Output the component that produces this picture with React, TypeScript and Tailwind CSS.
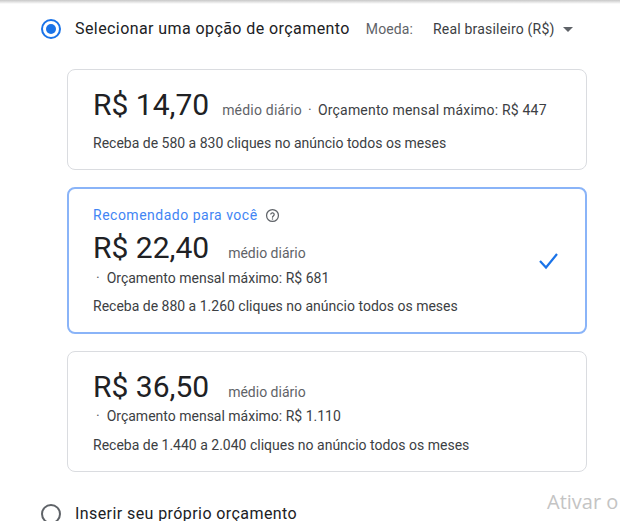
import React from 'react';

const font = { fontFamily: 'Roboto, "Liberation Sans", Arial, sans-serif' };

const Radio: React.FC<{ checked?: boolean }> = ({ checked }) => (
    <span
        className={`flex h-[20px] w-[20px] shrink-0 items-center justify-center rounded-full border-2 ${checked ? 'border-[#1a73e8]' : 'border-[#5f6368]'}`}
    >
        {checked && <span className="h-[10px] w-[10px] rounded-full bg-[#1a73e8]" />}
    </span>
);

interface Option {
    price: string;
    monthly: string;
    clicks: string;
    recommended?: boolean;
    inline?: boolean;
}

const options: Option[] = [
    { price: 'R$ 14,70', monthly: 'R$ 447', clicks: '580 a 830', inline: true },
    { price: 'R$ 22,40', monthly: 'R$ 681', clicks: '880 a 1.260', recommended: true },
    { price: 'R$ 36,50', monthly: 'R$ 1.110', clicks: '1.440 a 2.040' },
];

const BudgetCard: React.FC<{ opt: Option }> = ({ opt }) => {
    const border = opt.recommended
        ? 'border-2 border-[#8ab4f8] pl-[24px] pr-[25px] pt-[16px] pb-[16px]'
        : 'border border-[#dadce0] pl-[25px] pr-[28px] pt-[17px] pb-[16px]';
    return (
        <div className={`flex items-center rounded-[8px] bg-white ${border}`}>
            <div className="flex-1">
                {opt.recommended && (
                    <div className="mb-[5px] flex items-center gap-[7px] text-[14px] leading-[20px] tracking-[0.5px] text-[#4285f4]">
                        <span>Recomendado para você</span>
                        <svg width="15" height="15" viewBox="0 0 24 24" fill="none">
                            <circle cx="12" cy="12" r="9.5" stroke="#5f6368" strokeWidth="2" />
                            <path d="M9.3 9.6a2.8 2.8 0 0 1 5.4 1c0 1.9-2.7 2.3-2.7 4" stroke="#5f6368" strokeWidth="2" fill="none" strokeLinecap="round" />
                            <circle cx="12" cy="17.6" r="1.2" fill="#5f6368" />
                        </svg>
                    </div>
                )}
                <div className="flex items-baseline">
                    <span className="text-[30px] leading-[36px] text-[#202124]">{opt.price}</span>
                    <span className={`text-[14px] leading-[20px] text-[#5f6368] ${opt.inline ? 'ml-[13px] tracking-[0.2px]' : 'ml-[19px]'}`}>
                        médio diário
                        {opt.inline && (
                            <>
                                <span className="mx-[6px]">·</span>
                                <span className="text-[#3c4043]">Orçamento mensal máximo: {opt.monthly}</span>
                            </>
                        )}
                    </span>
                </div>
                {!opt.inline && (
                    <div className={`${opt.recommended ? 'mt-[2px]' : 'mt-[1px]'} pl-[3px] text-[14px] leading-[20px] text-[#3c4043]`}>
                        <span className="mr-[7px] text-[#5f6368]">·</span>Orçamento mensal máximo: {opt.monthly}
                    </div>
                )}
                <div className={`${opt.inline ? 'mt-[10px]' : opt.recommended ? 'mt-[8px]' : 'mt-[9px]'} text-[14px] leading-[20px] text-[#3c4043]`}>
                    Receba de {opt.clicks} cliques no anúncio todos os meses
                </div>
            </div>
            {opt.recommended && (
                <svg width="24" height="24" viewBox="0 0 24 24" className="shrink-0">
                    <path d="M4 12l6 6.5L21 5" stroke="#1a73e8" strokeWidth="2.2" fill="none" />
                </svg>
            )}
        </div>
    );
};

export default function App() {
    return (
        <div className="relative h-[521px] w-[620px] overflow-hidden bg-white" style={font}>
            <div className="h-[4px] bg-gradient-to-b from-[#c8c8c8] to-white" />
            <div className="flex items-center pl-[41px] pt-[15px]">
                <Radio checked />
                <span className="ml-[14px] text-[16px] leading-[20px] tracking-[0.42px] text-[#202124]">Selecionar uma opção de orçamento</span>
                <span className="ml-[16px] text-[14px] leading-[20px] tracking-[0.1px] text-[#5f6368]">Moeda:</span>
                <span className="ml-[20px] text-[14px] leading-[20px] tracking-[0.2px] text-[#3c4043]">Real brasileiro (R$)</span>
                <svg width="10" height="5" viewBox="0 0 10 5" className="ml-[8px]">
                    <path d="M0 0h10L5 5z" fill="#5f6368" />
                </svg>
            </div>
            <div className="mt-[30px] flex w-[520px] flex-col gap-[17px] ml-[67px]">
                {options.map((o) => (
                    <BudgetCard key={o.price} opt={o} />
                ))}
            </div>
            <div className="mt-[32px] flex items-center pl-[41px]">
                <Radio />
                <span className="ml-[14px] text-[16px] leading-[20px] tracking-[0.42px] text-[#202124]">Inserir seu próprio orçamento</span>
            </div>
            <div
                className="absolute left-[547px] top-[488px] text-[20px] leading-[28px] text-[#c4c4c4]"
                style={{ fontFamily: '"Open Sans", "Noto Sans", sans-serif' }}
            >
                Ativar o
                <div>Acesse C</div>
            </div>
        </div>
    );
}
